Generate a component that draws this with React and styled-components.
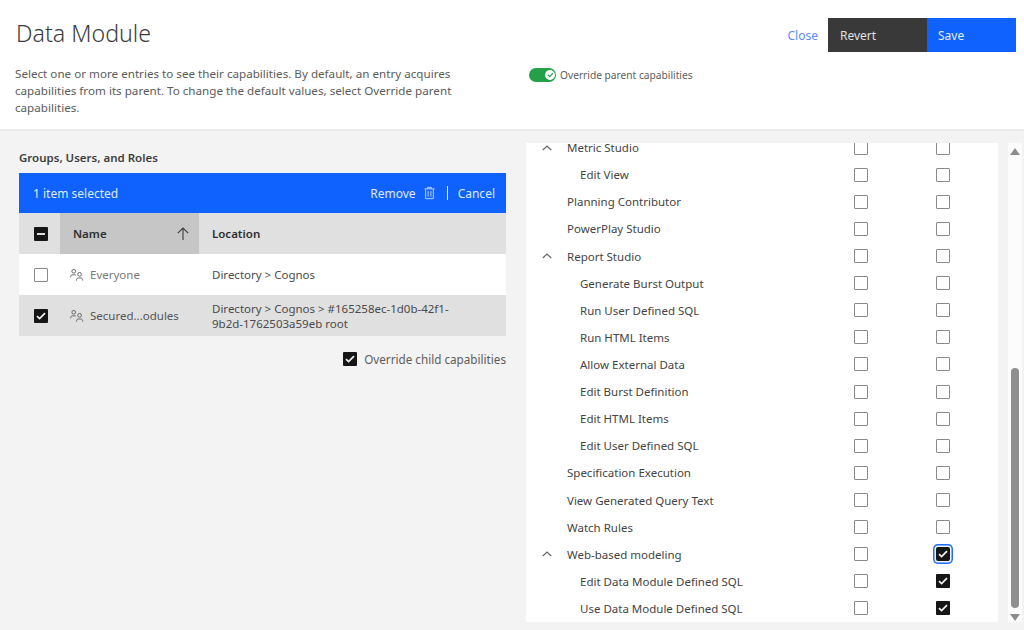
import React from "react";
import styled, { createGlobalStyle } from "styled-components";

const Global = createGlobalStyle`
  html, body { margin: 0; padding: 0; background: #f3f3f3; }
  body { font-family: "Noto Sans", "Open Sans", sans-serif; color: #393939; }
  * { box-sizing: border-box; }
`;

const Page = styled.div`
  width: 1024px;
  height: 630px;
  display: flex;
  flex-direction: column;
  overflow: hidden;
`;

const Header = styled.header`
  height: 131px;
  flex: none;
  background: #fff;
  border-bottom: 2px solid #ebebeb;
  display: flex;
  padding: 18px 8px 0 15px;
`;

const Intro = styled.div`
  width: 514px;
  flex: none;
`;

const Title = styled.h1`
  margin: 0;
  font-size: 23.2px;
  line-height: 31px;
  font-weight: 300;
  color: #3c3c3c;
  padding-left: 1px;
`;

const Description = styled.p`
  margin: 16px 0 0;
  width: 450px;
  font-size: 11.65px;
  line-height: 17px;
  color: #5c5c5c;
`;

const ToggleRow = styled.div`
  margin-top: 50px;
  height: 13px;
  display: flex;
  align-items: center;
  gap: 4px;
  font-size: 10.2px;
  color: #606060;
`;

const Pill = styled.span`
  width: 27px;
  height: 14px;
  border-radius: 7px;
  background: #24a148;
  display: flex;
  align-items: center;
  justify-content: flex-end;
  padding-right: 1px;
`;

const Knob = styled.span`
  width: 10px;
  height: 10px;
  border-radius: 50%;
  background: #fff;
  display: flex;
  align-items: center;
  justify-content: center;
`;

const Actions = styled.div`
  margin-left: auto;
  display: flex;
  align-items: center;
  height: 34px;
`;

const LinkButton = styled.span`
  font-size: 12px;
  color: #5a8bff;
  margin-right: 10px;
`;

const ActionButton = styled.span`
  height: 34px;
  width: ${(p) => p.$w}px;
  background: ${(p) => p.$bg};
  color: ${(p) => p.$fg};
  font-size: 12px;
  display: flex;
  align-items: center;
  padding-left: ${(p) => p.$pad}px;
`;

const Body = styled.main`
  flex: 1;
  display: flex;
  min-height: 0;
`;

const LeftPane = styled.section`
  width: 526px;
  flex: none;
  padding: 19px 20px 0 19px;
`;

const SectionTitle = styled.h2`
  margin: 0 0 8px;
  font-size: 11.5px;
  line-height: 15px;
  font-weight: 600;
  color: #3d3d3d;
`;

const SelectionBar = styled.div`
  height: 40px;
  background: #0f62fe;
  color: #dfe9ff;
  display: flex;
  align-items: center;
  padding: 0 11px 0 14px;
  font-size: 12px;
`;

const BarActions = styled.div`
  margin-left: auto;
  display: flex;
  align-items: center;
  gap: 8px;
`;

const Divider = styled.span`
  width: 1px;
  height: 14px;
  background: #dfe9ff;
  margin: 0 2px 0 4px;
`;

const GridRow = styled.div`
  display: grid;
  grid-template-columns: 41px 139px 1fr;
  align-items: stretch;
  height: ${(p) => p.$h}px;
  background: ${(p) => p.$bg};
`;

const Cell = styled.div`
  display: flex;
  align-items: center;
  min-width: 0;
  padding-left: ${(p) => p.$pad || 0}px;
  background: ${(p) => p.$bg || "transparent"};
`;

const HeadText = styled.span`
  font-size: 11.5px;
  font-weight: 600;
  color: #2f2f2f;
  flex: 1;
`;

const ArrowSlot = styled.span`
  display: flex;
  margin-right: 10px;
`;

const NameCell = styled.span`
  display: flex;
  align-items: center;
  gap: 6px;
  font-size: 11.5px;
  color: ${(p) => p.$fg};
`;

const LocationText = styled.span`
  font-size: 11.5px;
  line-height: 15px;
  color: #4a4a4a;
  width: 250px;
`;

const Box = styled.span`
  width: 14px;
  height: 14px;
  flex: none;
  border-radius: ${(p) => (p.$focus ? 2 : 1)}px;
  display: inline-flex;
  align-items: center;
  justify-content: center;
  background: ${(p) => (p.$on ? "#161616" : "#fff")};
  border: ${(p) => (p.$on ? "none" : "1.5px solid #8a8a8a")};
  box-shadow: ${(p) => (p.$focus ? "0 0 0 1.5px #f0f4ff, 0 0 0 3px #1f6bff" : "none")};
`;

const OverrideRow = styled.div`
  margin-top: 15px;
  display: flex;
  justify-content: flex-end;
  align-items: center;
  gap: 7px;
  font-size: 11.7px;
  color: #5c5c5c;
`;

const RightPane = styled.section`
  flex: 1;
  display: flex;
  padding: 12px 2px 8px 0;
  min-height: 0;
`;

const CapabilityPanel = styled.div`
  width: 472px;
  flex: none;
  background: #fff;
  overflow: hidden;
  display: flex;
  flex-direction: column;
  justify-content: flex-end;
`;

const CapRow = styled.div`
  flex: none;
  height: 27.11px;
  display: grid;
  grid-template-columns: 41px 1fr 82px 62px;
  align-items: center;
  font-size: 11.5px;
  color: #444;
`;

const BoxSlot = styled.span`
  display: flex;
  align-items: center;
`;

const Chevron = styled.span`
  display: flex;
  justify-content: center;
  color: #666;
`;

const CapLabel = styled.span`
  padding-left: ${(p) => (p.$child ? 13 : 0)}px;
`;

const Scrollbar = styled.div`
  width: 14px;
  margin-left: 10px;
  background: #fcfcfc;
  display: flex;
  flex-direction: column;
  align-items: center;
  padding: 5px 0 1.5px;
`;

const Thumb = styled.div`
  width: 8px;
  height: 240px;
  margin-top: auto;
  margin-bottom: 6px;
  border-radius: 4px;
  background: #8f8f8f;
`;

const Tri = styled.span`
  width: 0;
  height: 0;
  border-left: 5px solid transparent;
  border-right: 5px solid transparent;
  ${(p) =>
    p.$up ? "border-bottom: 7px solid #8c8c8c;" : "border-top: 7px solid #8c8c8c;"}
`;

const Check = () => (
  <svg width="10" height="8" viewBox="0 0 10 8" fill="none">
    <path d="M1 4.2 3.6 6.6 9 1.2" stroke="#f4f4f4" strokeWidth="1.7" />
  </svg>
);

const Checkbox = ({ on, focus }) => (
  <Box $on={on} $focus={focus}>{on && <Check />}</Box>
);

const UsersIcon = () => (
  <svg width="14" height="14" viewBox="0 0 15 14" fill="none" stroke="#5f5f5f" strokeWidth="1">
    <circle cx="4" cy="3" r="2" />
    <path d="M.8 9.5V8.6C.8 7.4 1.8 6.8 3 6.8h2c.5 0 1 .1 1.4.4" />
    <circle cx="10.3" cy="6.3" r="2" />
    <path d="M7 13v-.9c0-1.2 1-1.9 2.2-1.9h2.2c1.2 0 2.2.7 2.2 1.9v.9" />
  </svg>
);

const TrashIcon = () => (
  <svg width="11" height="14" viewBox="0 0 12 14" fill="none" stroke="#c9dbff" strokeWidth="1">
    <path d="M.5 2.5h11M4 2.5V.8h4v1.700M1.800 2.500v10.700h8.400V2.500M4.500 5v6M7.500 5v6" />
  </svg>
);

const ChevronUp = () => (
  <svg width="10" height="6" viewBox="0 0 10 6" fill="none" stroke="currentColor" strokeWidth="1.200">
    <path d="M.8 5 5 1l4.200 4" />
  </svg>
);

const ArrowUp = () => (
  <svg width="12" height="13" viewBox="0 0 12 13" fill="none" stroke="#3c3c3c" strokeWidth="1.100">
    <path d="M6 13V1M.8 6.200 6 1l5.200 5.200" />
  </svg>
);

const capabilities = [
  { label: "Metric Studio", parent: true },
  { label: "Edit View", child: true },
  { label: "Planning Contributor" },
  { label: "PowerPlay Studio" },
  { label: "Report Studio", parent: true },
  { label: "Generate Burst Output", child: true },
  { label: "Run User Defined SQL", child: true },
  { label: "Run HTML Items", child: true },
  { label: "Allow External Data", child: true },
  { label: "Edit Burst Definition", child: true },
  { label: "Edit HTML Items", child: true },
  { label: "Edit User Defined SQL", child: true },
  { label: "Specification Execution" },
  { label: "View Generated Query Text" },
  { label: "Watch Rules" },
  { label: "Web-based modeling", parent: true, on: true, focus: true },
  { label: "Edit Data Module Defined SQL", child: true, on: true },
  { label: "Use Data Module Defined SQL", child: true, on: true },
];

export default function App() {
  return (
    <Page>
      <Global />
      <Header>
        <Intro>
          <Title>Data Module</Title>
          <Description>
            Select one or more entries to see their capabilities. By default, an entry acquires
            capabilities from its parent. To change the default values, select Override parent
            capabilities.
          </Description>
        </Intro>
        <ToggleRow>
          <Pill>
            <Knob>
              <svg width="7" height="6" viewBox="0 0 7 6" fill="none">
                <path d="M1 3 2.800 4.600 6 1.200" stroke="#24a148" strokeWidth="1.200" />
              </svg>
            </Knob>
          </Pill>
          Override parent capabilities
        </ToggleRow>
        <Actions>
          <LinkButton>Close</LinkButton>
          <ActionButton $w={99} $pad={12} $bg="#393939" $fg="#e0e0e0">Revert</ActionButton>
          <ActionButton $w={89} $pad={11} $bg="#0f62fe" $fg="#e6eeff">Save</ActionButton>
        </Actions>
      </Header>
      <Body>
        <LeftPane>
          <SectionTitle>Groups, Users, and Roles</SectionTitle>
          <SelectionBar>
            1 item selected
            <BarActions>
              Remove
              <TrashIcon />
              <Divider />
              Cancel
            </BarActions>
          </SelectionBar>
          <GridRow $h={41} $bg="#e0e0e0">
            <Cell $pad={15}>
              <Box $on>
                <svg width="8" height="2" viewBox="0 0 8 2"><path d="M0 1h8" stroke="#f4f4f4" strokeWidth="1.800" /></svg>
              </Box>
            </Cell>
            <Cell $pad={13} $bg="#c6c6c6">
              <HeadText>Name</HeadText>
              <ArrowSlot><ArrowUp /></ArrowSlot>
            </Cell>
            <Cell $pad={13}><HeadText>Location</HeadText></Cell>
          </GridRow>
          <GridRow $h={41} $bg="#fff">
            <Cell $pad={15}><Checkbox /></Cell>
            <Cell $pad={10}>
              <NameCell $fg="#7a7a7a"><UsersIcon />Everyone</NameCell>
            </Cell>
            <Cell $pad={13}><LocationText>Directory &gt; Cognos</LocationText></Cell>
          </GridRow>
          <GridRow $h={41} $bg="#e0e0e0">
            <Cell $pad={15}><Checkbox on /></Cell>
            <Cell $pad={10}>
              <NameCell $fg="#555"><UsersIcon />Secured...odules</NameCell>
            </Cell>
            <Cell $pad={13}>
              <LocationText>Directory &gt; Cognos &gt; #165258ec-1d0b-42f1-9b2d-1762503a59eb root</LocationText>
            </Cell>
          </GridRow>
          <OverrideRow>
            <Checkbox on />
            Override child capabilities
          </OverrideRow>
        </LeftPane>
        <RightPane>
          <CapabilityPanel>
            {capabilities.map((c) => (
              <CapRow key={c.label}>
                <Chevron>{c.parent && <ChevronUp />}</Chevron>
                <CapLabel $child={c.child}>{c.label}</CapLabel>
                <BoxSlot><Checkbox /></BoxSlot>
                <BoxSlot><Checkbox on={c.on} focus={c.focus} /></BoxSlot>
              </CapRow>
            ))}
          </CapabilityPanel>
          <Scrollbar>
            <Tri $up />
            <Thumb />
            <Tri />
          </Scrollbar>
        </RightPane>
      </Body>
    </Page>
  );
}
